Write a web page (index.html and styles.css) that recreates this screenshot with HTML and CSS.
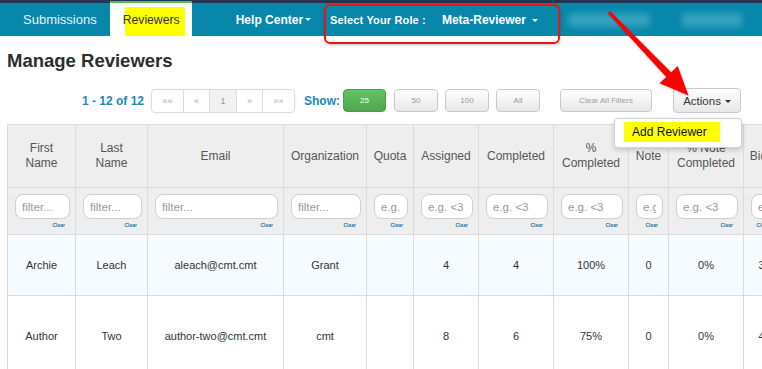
FILE: index.html
```html
<!DOCTYPE html>
<html>
<head>
<meta charset="utf-8">
<title>Manage Reviewers</title>
<link rel="stylesheet" href="styles.css">
</head>
<body>
<header class="nav">
  <a class="nav-item first">Submissions</a>
  <a class="nav-item active"><span class="tab-text">Reviewers</span></a>
  <a class="nav-item help">Help Center<span class="caret"></span></a>
  <div class="role">
    <span class="role-label">Select Your Role :</span>
    <span class="role-value">Meta-Reviewer<span class="caret"></span></span>
  </div>
  <div class="blur b1"></div>
  <div class="blur b2"></div>
</header>

<main class="content">
  <h1 class="title">Manage Reviewers</h1>
  <div class="toolbar">
    <span class="count">1 - 12 of 12</span>
    <div class="pager">
      <span class="pg w31">&laquo;&laquo;</span>
      <span class="pg w26">&laquo;</span>
      <span class="pg w27 current">1</span>
      <span class="pg w26">&raquo;</span>
      <span class="pg w32">&raquo;&raquo;</span>
    </div>
    <span class="show">Show:</span>
    <button class="btn size green">25</button>
    <button class="btn size s50">50</button>
    <button class="btn size s100">100</button>
    <button class="btn size sall">All</button>
    <button class="btn clear-all">Clear All Filters</button>
    <div class="actions-wrap">
      <button class="btn actions">Actions<span class="caret dark"></span></button>
      <div class="menu"><span class="menu-item">Add Reviewer</span></div>
    </div>
  </div>

  <table class="grid">
    <colgroup>
      <col class="c-first"><col class="c-last"><col class="c-email"><col class="c-org">
      <col class="c-quota"><col class="c-assigned"><col class="c-completed"><col class="c-pct">
      <col class="c-note"><col class="c-notepct"><col class="c-bids"><col class="c-more">
    </colgroup>
    <thead>
      <tr class="head">
        <th>First<br>Name</th>
        <th>Last<br>Name</th>
        <th>Email</th>
        <th>Organization</th>
        <th>Quota</th>
        <th>Assigned</th>
        <th>Completed</th>
        <th>%<br>Completed</th>
        <th>Note</th>
        <th>% Note<br>Completed</th>
        <th>Bids</th>
        <th>Conflicts</th>
      </tr>
      <tr class="filters">
        <td><input class="filter" placeholder="filter..."><span class="clr">Clear</span></td>
        <td><input class="filter" placeholder="filter..."><span class="clr">Clear</span></td>
        <td><input class="filter" placeholder="filter..."><span class="clr">Clear</span></td>
        <td><input class="filter" placeholder="filter..."><span class="clr">Clear</span></td>
        <td><input class="filter" placeholder="e.g. &lt;3"><span class="clr">Clear</span></td>
        <td><input class="filter" placeholder="e.g. &lt;3"><span class="clr">Clear</span></td>
        <td><input class="filter" placeholder="e.g. &lt;3"><span class="clr">Clear</span></td>
        <td><input class="filter" placeholder="e.g. &lt;3"><span class="clr">Clear</span></td>
        <td><input class="filter" placeholder="e.g. &lt;3"><span class="clr">Clear</span></td>
        <td><input class="filter" placeholder="e.g. &lt;3"><span class="clr">Clear</span></td>
        <td><input class="filter" placeholder="e.g. &lt;3"><span class="clr">Clear</span></td>
        <td><input class="filter" placeholder="e.g. &lt;3"><span class="clr">Clear</span></td>
      </tr>
    </thead>
    <tbody>
      <tr class="row r1">
        <td>Archie</td><td>Leach</td><td>aleach@cmt.cmt</td><td>Grant</td><td></td>
        <td>4</td><td>4</td><td>100%</td><td>0</td><td>0%</td><td>3</td><td>0</td>
      </tr>
      <tr class="row r2">
        <td>Author</td><td>Two</td><td>author-two@cmt.cmt</td><td>cmt</td><td></td>
        <td>8</td><td>6</td><td>75%</td><td>0</td><td>0%</td><td>4</td><td>0</td>
      </tr>
    </tbody>
  </table>
</main>

<svg class="arrow" width="762" height="369" viewBox="0 0 762 369">
  <polygon points="607.9,13.2 666.2,77.1 659.5,83.3 688.5,95.5 677.7,66.1 671.2,72.3 610.1,11" fill="#fe0000"/>
</svg>
</body>
</html>
```

FILE: styles.css
```css
* { box-sizing: border-box; }
html, body {
  margin: 0;
  padding: 0;
  width: 762px;
  height: 369px;
  overflow: hidden;
  background: #fff;
  font-family: "Liberation Sans", Arial, sans-serif;
  color: #333;
}

/* ---------- top nav ---------- */
.nav {
  position: relative;
  display: flex;
  align-items: center;
  height: 36px;
  background: #0787aa;
  border-top: 3px solid #233850;
}
.nav-item {
  display: flex;
  align-items: center;
  height: 100%;
  white-space: nowrap;
}
.nav-item.first {
  margin-left: 10px;
  padding: 0 13px;
  font-size: 13px;
  color: #e4f1f5;
}
.nav-item.active {
  position: relative;
  align-self: flex-start;
  margin-top: -2px;
  height: 35px;
  width: 82px;
  padding: 0 0 0 13px;
  background: #fff;
  border-top: 2px solid #5cb85c;
  font-size: 12.2px;
  color: #333;
}
.nav-item.active::before {
  content: "";
  position: absolute;
  left: 15px;
  right: 7px;
  top: 4px;
  bottom: 0;
  background: #ffff00;
}
.tab-text { position: relative; padding-top: 1px; }
.nav-item.help {
  margin-left: 44px;
  font-size: 12px;
  font-weight: bold;
  color: #fff;
}
.caret {
  display: inline-block;
  width: 0;
  height: 0;
  margin-left: 2px;
  border-left: 3px solid transparent;
  border-right: 3px solid transparent;
  border-top: 3px solid #fff;
  vertical-align: middle;
}
.caret.dark { border-top-color: #333; margin-left: 4px; }
.role {
  position: relative;
  display: flex;
  align-items: center;
  margin-left: 19px;
  white-space: nowrap;
  color: #fff;
  font-weight: bold;
}
.role::after {
  content: "";
  position: absolute;
  left: -6px;
  right: -22px;
  top: -9px;
  bottom: -17px;
  border: 2px solid #e8161a;
  border-radius: 6px;
  box-shadow: 0 1px 3px rgba(0,0,0,0.25);
  z-index: 5;
}
.role-label { font-size: 11px; letter-spacing: 0.15px; }
.role-value { margin-left: 16px; font-size: 12px; }
.role-value .caret { margin-left: 6px; }
.blur {
  height: 14px;
  background: #45a9c6;
  filter: blur(3px);
  opacity: 0.75;
  border-radius: 4px;
}
.b1 { width: 82px; margin-left: 30px; }
.b2 { width: 60px; margin-left: 32px; }

/* ---------- content ---------- */
.content { padding: 0 7px; }
.title {
  margin: 14px 0 0;
  font-size: 18.5px;
  line-height: 22px;
  font-weight: bold;
  color: #2d2d2d;
}
.toolbar {
  display: flex;
  align-items: center;
  height: 25px;
  margin-top: 16px;
  padding-left: 75px;
}
.count {
  font-size: 12px;
  font-weight: bold;
  color: #1b89bd;
  white-space: nowrap;
}
.pager {
  display: flex;
  height: 24px;
  margin-left: 7px;
  border: 1px solid #dcdcdc;
  border-radius: 4px;
  overflow: hidden;
  box-shadow: 0 0 4px rgba(0,0,0,0.04);
}
.pg {
  display: flex;
  align-items: center;
  justify-content: center;
  font-size: 9px;
  color: #aaa;
  border-left: 1px solid #dcdcdc;
}
.pg:first-child { border-left: 0; }
.pg.current { background: #f1f1f1; color: #999; }
.w31 { width: 31px; }
.w26 { width: 26px; }
.w27 { width: 27px; }
.w32 { width: 32px; }
.show {
  margin-left: 9px;
  font-size: 12px;
  font-weight: bold;
  color: #1b89bd;
}
.btn {
  height: 23px;
  padding: 0;
  font-family: "Liberation Sans", Arial, sans-serif;
  font-size: 8px;
  color: #999;
  background: linear-gradient(#ffffff, #e7e7e7);
  border: 1px solid #c9c9c9;
  border-radius: 4px;
  white-space: nowrap;
}
.size { width: 44px; margin-left: 7px; }
.size.green {
  width: 43px;
  margin-left: 3px;
  color: #fff;
  background: linear-gradient(#62c462, #4fa64f);
  border-color: #4a9d4a;
}
.size.s50 { margin-left: 8px; }
.clear-all { width: 92px; margin-left: 20px; color: #a0a0a0; }
.actions-wrap { position: relative; margin-left: 21px; }
.actions {
  display: block;
  width: 68px;
  height: 25px;
  font-size: 11.5px;
  color: #333;
}
.menu {
  position: absolute;
  top: 30px;
  left: -59px;
  width: 128px;
  height: 30px;
  padding: 3px 0 0 9px;
  background: #fff;
  border: 1px solid #d2d2d2;
  border-radius: 4px;
  box-shadow: 0 2px 5px rgba(0,0,0,0.18);
  z-index: 6;
}
.menu-item {
  display: block;
  width: 96px;
  height: 20px;
  padding-left: 8px;
  line-height: 20px;
  font-size: 12px;
  color: #111;
  background: #ffff00;
}

/* ---------- table ---------- */
.grid {
  margin-top: 11px;
  border-collapse: collapse;
  table-layout: fixed;
  width: 866px;
  border: 1px solid #dcdcdc;
}
.c-first { width: 68px; }
.c-last { width: 72px; }
.c-email { width: 136px; }
.c-org { width: 83px; }
.c-quota { width: 47px; }
.c-assigned { width: 65px; }
.c-completed { width: 75px; }
.c-pct { width: 75px; }
.c-note { width: 40px; }
.c-notepct { width: 75px; }
.c-bids { width: 36px; }
.c-more { width: 94px; }
.grid th, .grid td {
  border: 1px solid #dcdcdc;
  text-align: center;
  vertical-align: middle;
  overflow: hidden;
  white-space: nowrap;
}
.head th {
  height: 63px;
  padding: 0;
  background: #eeeeee;
  font-size: 12px;
  line-height: 15px;
  font-weight: normal;
  color: #555;
}
.filters td {
  height: 47px;
  padding: 6px 5px 0 7px;
  vertical-align: top;
  background: #eeeeee;
}
.filter {
  display: block;
  width: 100%;
  height: 25px;
  padding: 0 6px;
  border: 1px solid #cfcfcf;
  border-radius: 8px;
  background: #fff;
  font-family: "Liberation Sans", Arial, sans-serif;
  font-size: 11.5px;
  color: #333;
  outline: none;
}
.filter::placeholder { color: #999; }
.clr {
  display: block;
  margin: 3px 5px 0 0;
  text-align: right;
  font-size: 5px;
  line-height: 6px;
  font-weight: bold;
  color: #1779a6;
}
.row td {
  font-size: 11px;
  color: #333;
}
.r1 td { height: 61px; background: #f5fbff; }
.r2 td { height: 80px; background: #fff; }

/* ---------- annotation arrow ---------- */
.arrow {
  position: absolute;
  top: 0;
  left: 0;
  pointer-events: none;
  z-index: 10;
  filter: drop-shadow(0 1px 1px rgba(0,0,0,0.2));
}
```
